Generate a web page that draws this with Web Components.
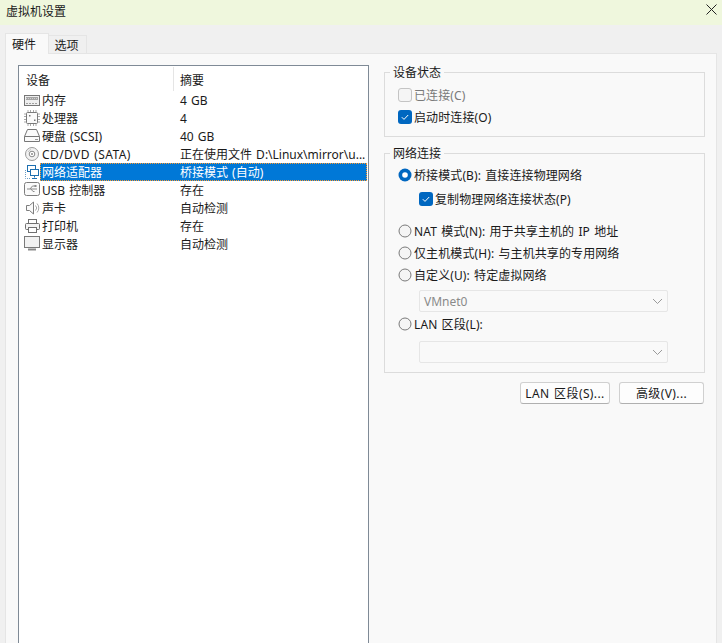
<!DOCTYPE html>
<html lang="zh-CN">
<head>
<meta charset="utf-8">
<title>虚拟机设置</title>
<style>
  html, body { margin: 0; height: 643px; overflow: hidden; background: #f0f0f0; }
  body { font: 12px "Noto Sans", "Noto Sans CJK SC", sans-serif; color: #1a1a1a; word-spacing: 1px; }
</style>
</head>
<body>
<vm-dialog heading="虚拟机设置">
  <device-table>
    <device-row icon="memory" name="内存" summary="4 GB"></device-row>
    <device-row icon="cpu" name="处理器" summary="4"></device-row>
    <device-row icon="disk" name="硬盘 (SCSI)" summary="40 GB"></device-row>
    <device-row icon="cd" name="CD/DVD (SATA)" summary="正在使用文件 D:\Linux\mirror\u..." style="--name-spacing:.4px"></device-row>
    <device-row icon="network" name="网络适配器" summary="桥接模式 (自动)" selected></device-row>
    <device-row icon="usb" name="USB 控制器" summary="存在"></device-row>
    <device-row icon="sound" name="声卡" summary="自动检测"></device-row>
    <device-row icon="printer" name="打印机" summary="存在"></device-row>
    <device-row icon="display" name="显示器" summary="自动检测"></device-row>
  </device-table>
  <settings-column slot="side">
    <group-box label="设备状态" style="height:65px">
      <option-row type="check" disabled label="已连接(C)" style="margin-top:3px"></option-row>
      <option-row type="check" checked label="启动时连接(O)"></option-row>
    </group-box>
    <group-box label="网络连接" style="height:220px;margin-top:16px">
      <option-row type="radio" checked label="桥接模式(B): 直接连接物理网络" style="margin-top:2px"></option-row>
      <option-row type="check" checked indent label="复制物理网络连接状态(P)" style="margin-top:2px"></option-row>
      <option-row type="radio" label="NAT 模式(N): 用于共享主机的 IP 地址" style="margin-top:10px"></option-row>
      <option-row type="radio" label="仅主机模式(H): 与主机共享的专用网络"></option-row>
      <option-row type="radio" label="自定义(U): 特定虚拟网络"></option-row>
      <combo-box value="VMnet0" style="margin-top:4px"></combo-box>
      <option-row type="radio" label="LAN 区段(L):" style="margin-top:1px"></option-row>
      <combo-box style="margin-top:6px"></combo-box>
    </group-box>
    <button-row>
      <dialog-button label="LAN 区段(S)..." style="width:90px"></dialog-button>
      <dialog-button label="高级(V)..." style="width:85px"></dialog-button>
    </button-row>
  </settings-column>
</vm-dialog>

<script>
const ICONS = {
  memory: `<rect x="1.500" y="4.500" width="15" height="10" fill="#efefef" stroke="#767676"/><rect x="3" y="6" width="12" height="3" fill="#a4a4a4"/><path d="M3 7.500h12" stroke="#d0d0d0" stroke-dasharray="1 1"/><path d="M3 12.500h12" stroke="#a0a0a0" stroke-dasharray="2 1"/>`,
  cpu: `<path d="M5 1v16M7.500 1v16M10.500 1v16M13 1v16M1 5h16M1 7.500h16M1 10.500h16M1 13h16" stroke="#a8a8a8"/><rect x="3.500" y="3.500" width="11" height="11" rx="1" fill="#fafafa" stroke="#7a7a7a"/><path d="M6 6h1.500v1.500H6zM11 10.500h1.500V12H11z" fill="#777"/>`,
  disk: `<path d="M4.500 2.500h9l3 7v5h-15v-5z" fill="#fafafa" stroke="#777"/><path d="M1.500 9.500h15" stroke="#777"/><path d="M12 12.500h3" stroke="#999"/>`,
  cd: `<circle cx="9" cy="9" r="6.500" fill="#f2f2f2" stroke="#9a9a9a"/><circle cx="9" cy="9" r="2.800" fill="#fff" stroke="#8a8a8a"/><circle cx="9" cy="9" r="1" fill="#8a8a8a"/><path d="M5 7a5 5 0 0 1 3-2.500" fill="none" stroke="#c4c4c4"/>`,
  network: `<rect x="4.500" y="2.500" width="8" height="6" fill="#fff" stroke="#1d6fb0"/><rect x="7.500" y="6.500" width="8" height="6" fill="#fff" stroke="#1d6fb0"/><path d="M11.500 12.500v2M9 15.500h5" stroke="#1d6fb0"/><path d="M2.500 7v8.500H7" fill="none" stroke="#6a9cc4" stroke-dasharray="1 1"/>`,
  usb: `<rect x="1.500" y="1.500" width="15" height="13" rx="2" fill="#fafafa" stroke="#7d7d7d"/><path d="M4 8h10M7 8l2.500-3H12M8 8l2 2.500h1.500" fill="none" stroke="#8a8a8a"/><rect x="11.500" y="4" width="2" height="2" fill="#8a8a8a"/>`,
  sound: `<path d="M3.500 6.500h3l4-3.500v12l-4-3.500h-3z" fill="#fafafa" stroke="#7d7d7d"/><path d="M12.500 6.500a3.500 3.500 0 0 1 0 5M14 4.500a6.500 6.500 0 0 1 0 9" fill="none" stroke="#a8a8a8"/>`,
  printer: `<rect x="5.500" y="2.500" width="8" height="4" fill="#fff" stroke="#707070"/><rect x="2.500" y="6.500" width="14" height="6" rx="1" fill="#f4f4f4" stroke="#707070"/><rect x="5.500" y="10.500" width="8" height="5" fill="#fff" stroke="#707070"/>`,
  display: `<rect x="1.500" y="1.500" width="15" height="11" fill="#f2f2f2" stroke="#7a7a7a"/><path d="M5 14.500h8" stroke="#8a8a8a" stroke-width="2"/>`
};

class VmDialog extends HTMLElement {
  constructor() {
    super();
    this.attachShadow({ mode: 'open' });
    this.shadowRoot.innerHTML = `
      <style>
        :host { display: flex; flex-direction: column; height: 643px; background: #f0f0f0; }
        .title {
          height: 25px; flex: none; display: flex; align-items: center; justify-content: space-between;
          padding: 0 5px 4px 6px; box-sizing: border-box; background: #eff7dd;
        }
        .title svg { display: block; align-self: flex-start; margin-top: 4px; }
        .tabs { display: flex; align-items: flex-end; height: 28px; flex: none; margin-left: 5px; position: relative; z-index: 1; }
        .tab {
          box-sizing: border-box; height: 18px; width: 38px; display: flex; align-items: center; justify-content: center;
          padding-right: 2px; background: #f0f0f0; border: 1px solid #e5e5e5; border-width: 1px 1px 0 0;
        }
        .tab.on {
          height: 21px; width: 44px; background: #f9f9f9; border-width: 1px 1px 0 1px; margin-bottom: -1px;
          padding-right: 6px;
        }
        .panel {
          flex: 1; display: flex; box-sizing: border-box; margin: 0 5px 0 5px;
          padding: 11px 11px 0 12px; gap: 15px; background: #f9f9f9; border: 1px solid #e5e5e5; border-bottom: 0;
        }
      </style>
      <div class="title"><span>${this.getAttribute('heading')}</span>
        <svg width="11" height="11" viewBox="0 0 11 11"><path d="M.5.500l10 10M10.500.500l-10 10" stroke="#222" fill="none"/></svg>
      </div>
      <div class="tabs"><div class="tab on">硬件</div><div class="tab">选项</div></div>
      <div class="panel"><slot></slot><slot name="side"></slot></div>`;
  }
}

class DeviceTable extends HTMLElement {
  constructor() {
    super();
    this.attachShadow({ mode: 'open' });
    this.shadowRoot.innerHTML = `
      <style>
        :host { display: block; box-sizing: border-box; width: 351px; flex: none; background: #fff; border: 1px solid #7f8a96; border-bottom: 0; }
        .head { display: grid; grid-template-columns: 154px 1fr; height: 25px; align-items: center; }
        .head span { padding-left: 7px; height: 24px; line-height: 28px; }
        .head span + span { border-left: 1px solid #e5e5e5; padding-left: 6px; }
      </style>
      <div class="head"><span>设备</span><span>摘要</span></div>
      <slot></slot>`;
  }
}

class DeviceRow extends HTMLElement {
  constructor() {
    super();
    this.attachShadow({ mode: 'open' });
    this.shadowRoot.innerHTML = `
      <style>
        :host { display: block; height: 18px; }
        .row { display: grid; grid-template-columns: 21px 133px 1fr; height: 18px; align-items: center; }
        svg { display: block; margin-left: 4px; }
        .name, .summary { box-sizing: border-box; height: 18px; padding-top: 2px; line-height: 16px; white-space: nowrap; }
        .name { padding-left: 2px; letter-spacing: var(--name-spacing, 0); }
        .summary { padding-left: 7px; overflow: hidden; }
        .selected { grid-column: 2 / 4; display: grid; grid-template-columns: 133px 1fr; height: 18px; margin-right: 1px; background: #0078d7; color: #fff;
          outline: 1px dotted #ff9a2e; outline-offset: -1px; }
      </style>`;
    const icon = `<svg width="18" height="18" viewBox="0 0 18 18" aria-hidden="true">${ICONS[this.getAttribute('icon')]}</svg>`;
    const cells = `<span class="name">${this.getAttribute('name')}</span><span class="summary">${this.getAttribute('summary')}</span>`;
    const row = document.createElement('div');
    row.className = 'row';
    row.innerHTML = this.hasAttribute('selected') ? icon + `<div class="selected">${cells}</div>` : icon + cells;
    this.shadowRoot.appendChild(row);
  }
}

class SettingsColumn extends HTMLElement {
  constructor() {
    super();
    this.attachShadow({ mode: 'open' });
    this.shadowRoot.innerHTML = `
      <style>:host { display: flex; flex-direction: column; width: 321px; flex: none; }</style>
      <slot></slot>`;
  }
}

class GroupBox extends HTMLElement {
  constructor() {
    super();
    this.attachShadow({ mode: 'open' });
    this.shadowRoot.innerHTML = `
      <style>
        :host { display: block; box-sizing: border-box; margin-top: 7px; border: 1px solid #dcdcdc; padding: 0 13px; }
        .legend { display: table; margin: -9px 0 0 -8px; padding: 0 3px; height: 17px; line-height: 17px; background: #f9f9f9; }
      </style>
      <div class="legend">${this.getAttribute('label')}</div>
      <slot></slot>`;
  }
}

class OptionRow extends HTMLElement {
  constructor() {
    super();
    this.attachShadow({ mode: 'open' });
    const type = this.getAttribute('type');
    const on = this.hasAttribute('checked');
    const off = this.hasAttribute('disabled');
    let mark;
    if (type === 'radio') {
      mark = on
        ? `<circle cx="7" cy="7" r="6.500" fill="#0067c0"/><circle cx="7" cy="7" r="2.800" fill="#fff"/>`
        : `<circle cx="7" cy="7" r="6" fill="#f5f5f5" stroke="#7a7a7a"/>`;
    } else {
      mark = on
        ? `<rect width="14" height="14" rx="3" fill="#0067c0"/><path d="M3.800 7.200l2.200 2.200 4.200-4.400" fill="none" stroke="#fff"/>`
        : `<rect x=".5" y=".5" width="13" height="13" rx="2.500" fill="#f5f5f5" stroke="${off ? '#c4c4c4' : '#7a7a7a'}"/>`;
    }
    this.shadowRoot.innerHTML = `
      <style>
        :host { display: block; height: 22px; }
        .row { display: flex; align-items: center; gap: 2px; height: 22px; white-space: nowrap; letter-spacing: .1px; }
        :host([indent]) .row { padding-left: 21px; }
        :host([disabled]) .row { color: #7a7a7a; }
        svg { flex: none; }
      </style>
      <div class="row"><svg width="14" height="14" viewBox="0 0 14 14" aria-hidden="true">${mark}</svg><span>${this.getAttribute('label')}</span></div>`;
  }
}

class ComboBox extends HTMLElement {
  constructor() {
    super();
    this.attachShadow({ mode: 'open' });
    this.shadowRoot.innerHTML = `
      <style>
        :host { display: flex; box-sizing: border-box; align-items: center; justify-content: space-between; width: 249px; height: 22px; margin-left: 21px;
          padding: 0 4px; background: #f9f9f9; border: 1px solid #e6e6e6; border-radius: 2px; color: #8a8a8a; }
      </style>
      <span>${this.getAttribute('value') || ''}</span>
      <svg width="11" height="7" viewBox="0 0 11 7" aria-hidden="true"><path d="M1 1l4.500 4.500L10 1" fill="none" stroke="#9a9a9a"/></svg>`;
  }
}

class ButtonRow extends HTMLElement {
  constructor() {
    super();
    this.attachShadow({ mode: 'open' });
    this.shadowRoot.innerHTML = `
      <style>:host { display: flex; justify-content: flex-end; gap: 9px; margin-top: 9px; padding-right: 1px; }</style>
      <slot></slot>`;
  }
}

class DialogButton extends HTMLElement {
  constructor() {
    super();
    this.attachShadow({ mode: 'open' });
    this.shadowRoot.innerHTML = `
      <style>
        :host { display: flex; box-sizing: border-box; align-items: center; justify-content: center; height: 22px; flex: none;
          background: #fdfdfd; border: 1px solid #d0d0d0; border-bottom-color: #b0b0b0; border-radius: 3px; letter-spacing: .4px; }
      </style>
      <span>${this.getAttribute('label')}</span>`;
  }
}

customElements.define('vm-dialog', VmDialog);
customElements.define('device-table', DeviceTable);
customElements.define('device-row', DeviceRow);
customElements.define('settings-column', SettingsColumn);
customElements.define('group-box', GroupBox);
customElements.define('option-row', OptionRow);
customElements.define('combo-box', ComboBox);
customElements.define('button-row', ButtonRow);
customElements.define('dialog-button', DialogButton);
</script>
</body>
</html>
